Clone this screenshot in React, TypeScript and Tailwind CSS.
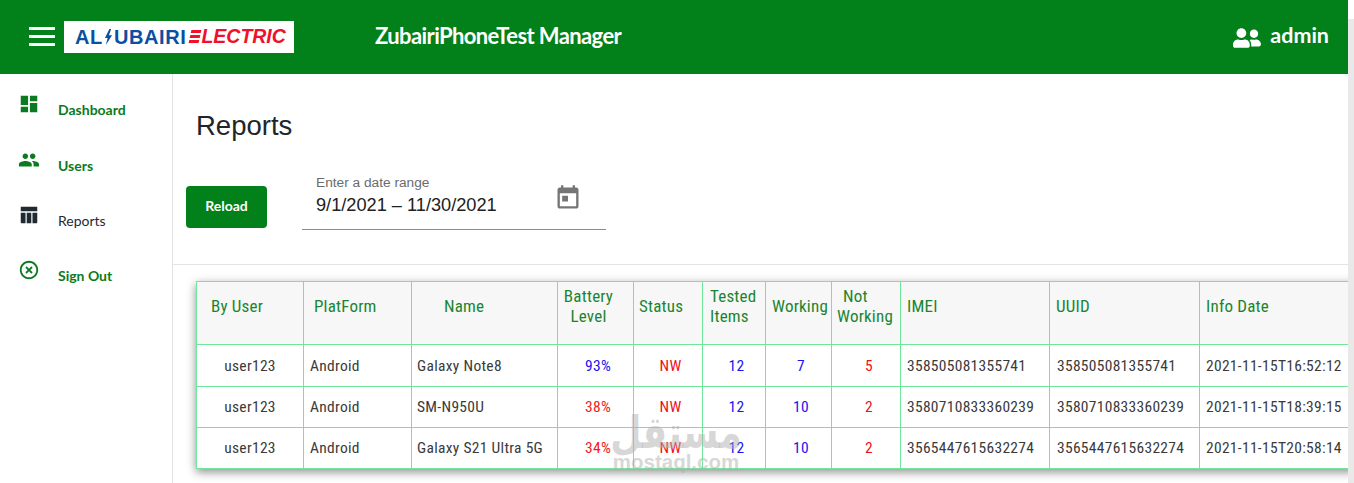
import { FaUserFriends } from "react-icons/fa";

const GREEN = "#02801a";
const cols = [107, 108, 146, 76, 69, 63, 66, 69, 149, 150, 155];
const HEAD = "Lato, 'Noto Sans', sans-serif";

const rows = [
  ["user123", "Android", "Galaxy Note8", "93%", "NW", "12", "7", "5", "358505081355741", "358505081355741", "2021-11-15T16:52:12", true],
  ["user123", "Android", "SM-N950U", "38%", "NW", "12", "10", "2", "3580710833360239", "3580710833360239", "2021-11-15T18:39:15", false],
  ["user123", "Android", "Galaxy S21 Ultra 5G", "34%", "NW", "12", "10", "2", "3565447615632274", "3565447615632274", "2021-11-15T20:58:14", false],
] as const;

function Icon({ d, className }: { d: string; className: string }) {
  return (
    <svg viewBox="0 0 24 24" fill="currentColor" className={className}>
      <path d={d} />
    </svg>
  );
}

function NavItem({ label, d, active, h }: { label: string; d: string; active: boolean; h: string }) {
  return (
    <div className={`flex items-center pl-[18px] ${h} ${active ? "text-[#0b7a20] font-bold" : "text-[#1f2a33]"}`}>
      <Icon d={d} className="w-[22px] h-[22px] mb-[11px]" />
      <span className="ml-[18px] text-[14px]" style={{ fontFamily: HEAD }}>{label}</span>
    </div>
  );
}

const th = "border-t border-r border-b border-[#6fe89b] bg-[#f7f7f7] font-normal text-[#1a8530] text-[17px] leading-[20px] tracking-[0.2px] p-0 pb-[14px] align-middle";
const td = "border-r border-b border-[#6fe89b] p-0 align-middle text-[15.5px] leading-[20px] tracking-[0.3px] whitespace-nowrap";
const cond = { fontFamily: "Roboto, sans-serif", fontStretch: "75%" };

export default function App() {
  return (
    <div className="h-[483px] w-[1354px] overflow-hidden flex bg-white" style={{ fontFamily: "'Liberation Sans', sans-serif" }}>
      <div className="w-[1348px] flex flex-col">
        <header className="h-[74px] shrink-0 flex items-center text-white" style={{ backgroundColor: GREEN }}>
          <div className="ml-[29px] w-[26px] flex flex-col gap-[5px] -mt-[1px]">
            <span className="block h-[3px] bg-white" />
            <span className="block h-[3px] bg-white" />
            <span className="block h-[3px] bg-white" />
          </div>
          <div className="ml-[9px] w-[230px] h-[32px] -mt-[1px] bg-white flex items-center pl-[11px] text-[20px] font-bold">
            <span className="text-[#0b4fa0] flex items-center tracking-[0.6px]">
              AL
              <svg viewBox="0 0 10 18" className="w-[9px] h-[16px] mx-[1px]" fill="#0b4fa0"><path d="M6 0L1 10h3l-2 8 7-11H5.5L8 0z" /></svg>
              UBAIRI
            </span>
            <span className="flex flex-col gap-[2px] ml-[4px] -skew-x-12">
              <span className="block w-[10px] h-[3px] bg-[#f0102a]" />
              <span className="block w-[10px] h-[3px] bg-[#f0102a]" />
              <span className="block w-[10px] h-[3px] bg-[#f0102a]" />
            </span>
            <span className="text-[#f0102a] italic text-[19.5px] ml-[1px]">LECTRIC</span>
          </div>
          <div className="ml-[81px] -mt-[4px] text-[22px] font-bold tracking-[-0.6px]" style={{ fontFamily: HEAD }}>ZubairiPhoneTest Manager</div>
          <div className="ml-auto mr-[19px] flex items-center -mt-[4px]">
            <FaUserFriends className="w-[28px] h-[28px] mt-[6px]" />
            <span className="ml-[9px] text-[21.5px] font-bold" style={{ fontFamily: HEAD }}>admin</span>
          </div>
        </header>
        <div className="flex-1 flex min-h-0">
          <aside className="w-[173px] shrink-0 border-r border-[#e2e2e2] pt-[7px]">
            <NavItem h="h-[57px]" label="Dashboard" active d="M3 13h8V3H3v10zm0 8h8v-6H3v6zm10 0h8V11h-8v10zm0-18v6h8V3h-8z" />
            <NavItem h="h-[55px]" label="Users" active d="M16 11c1.66 0 2.99-1.34 2.99-3S17.66 5 16 5c-1.66 0-3 1.34-3 3s1.34 3 3 3zm-8 0c1.66 0 2.99-1.34 2.99-3S9.66 5 8 5C6.34 5 5 6.34 5 8s1.34 3 3 3zm0 2c-2.33 0-7 1.17-7 3.5V19h14v-2.5c0-2.33-4.67-3.5-7-3.5zm8 0c-.29 0-.62.02-.97.05 1.16.84 1.97 1.97 1.97 3.45V19h6v-2.5c0-2.33-4.67-3.5-7-3.5z" />
            <NavItem h="h-[55px]" label="Reports" active={false} d="M3 3h18v5H3zM3 9.5h5.2V21H4a1 1 0 0 1-1-1zM9.5 9.5h5V21h-5zM15.8 9.5H21V20a1 1 0 0 1-1 1h-4.2z" />
            <NavItem h="h-[55px]" label="Sign Out" active d="M14.59 8L12 10.59 9.41 8 8 9.41 10.59 12 8 14.59 9.41 16 12 13.41 14.59 16 16 14.59 13.41 12 16 9.41 14.59 8zM12 2C6.47 2 2 6.47 2 12s4.47 10 10 10 10-4.47 10-10S17.53 2 12 2zm0 18c-4.41 0-8-3.59-8-8s3.59-8 8-8 8 3.59 8 8-3.59 8-8 8z" />
          </aside>
          <main className="flex-1 min-w-0 relative overflow-hidden">
            <h1 className="ml-[23px] mt-[35px] text-[27.5px] leading-[34px] text-[#212529]">Reports</h1>
            <div className="flex h-[99px] mt-[23px] border-b border-[#e4e4e4]">
              <button className="ml-[13px] mt-[20px] w-[81px] h-[42px] pb-[3px] rounded-[4px] text-white text-[14px] font-bold" style={{ backgroundColor: GREEN, fontFamily: HEAD }}>Reload</button>
              <div className="ml-[35px] mt-[16px] w-[304px] h-[48px] border-b border-[#8c8c8c] pl-[14px] relative">
                <div className="text-[13.7px] leading-[16px] text-[#6b6b6b] -mt-[7px]">Enter a date range</div>
                <div className="text-[18.2px] leading-[22px] text-[#212121] mt-[3px]">9/1/2021 – 11/30/2021</div>
                <Icon d="M19 3h-1V1h-2v2H8V1H6v2H5c-1.11 0-1.99.9-1.99 2L3 19c0 1.1.89 2 2 2h14c1.1 0 2-.9 2-2V5c0-1.1-.9-2-2-2zm0 16H5V8h14v11zM7 10h5v5H7z" className="absolute left-[252px] top-[2px] w-[28px] h-[28px] text-[#757575]" />
              </div>
            </div>
            <div className="ml-[23px] mt-[16px] w-[1159px]">
              <table className="table-fixed border-separate border-spacing-0 border-l border-[#6fe89b] shadow-[0_3px_9px_rgba(0,0,0,0.45)] w-[1159px]" style={cond}>
                <colgroup>
                  {cols.map((w, i) => (
                    <col key={i} style={{ width: w }} />
                  ))}
                </colgroup>
                <thead>
                  <tr className="h-[64px]">
                    <th className={`${th} text-left pl-[14px]`}>By User</th>
                    <th className={`${th} text-left pl-[10px]`}>PlatForm</th>
                    <th className={`${th} text-left pl-[32px]`}>Name</th>
                    <th className={`${th} text-center pr-[14px]`}>Battery<br />Level</th>
                    <th className={`${th} text-left pl-[5px]`}>Status</th>
                    <th className={`${th} text-left pl-[7px]`}>Tested<br />Items</th>
                    <th className={`${th} text-left pl-[6px]`}>Working</th>
                    <th className={`${th} text-left pl-[5px]`}><span className="pl-[6px]">Not</span><br />Working</th>
                    <th className={`${th} text-left pl-[6px]`}>IMEI</th>
                    <th className={`${th} text-left pl-[6px]`}>UUID</th>
                    <th className={`${th} text-left pl-[6px]`}>Info Date</th>
                  </tr>
                </thead>
                <tbody>
                  {rows.map((r, i) => (
                    <tr key={i} className={i === 0 ? "h-[42px] text-[#3a3a3a]" : "h-[41px] text-[#3a3a3a]"}>
                      <td className={`${td} text-center`}>{r[0]}</td>
                      <td className={`${td} pl-[6px]`}>{r[1]}</td>
                      <td className={`${td} pl-[5px]`}>{r[2]}</td>
                      <td className={`${td} text-center pl-[5px] ${r[11] ? "text-[#1a12f0]" : "text-[#f02020]"}`}>{r[3]}</td>
                      <td className={`${td} text-center pl-[5px] text-[#f0101a]`}>{r[4]}</td>
                      <td className={`${td} text-center pl-[5px] text-[#1a12f0]`}>{r[5]}</td>
                      <td className={`${td} text-center pl-[5px] text-[#1a12f0]`}>{r[6]}</td>
                      <td className={`${td} text-center pl-[6px] text-[#f0101a]`}>{r[7]}</td>
                      <td className={`${td} pl-[6px]`}>{r[8]}</td>
                      <td className={`${td} pl-[7px]`}>{r[9]}</td>
                      <td className={`${td} pl-[6px]`}>{r[10]}</td>
                    </tr>
                  ))}
                </tbody>
              </table>
            </div>
            <div className="absolute left-[428px] top-[339px] w-[150px] text-center text-[#b0b0b0]/50 pointer-events-none">
              <div className="text-[36px] leading-[40px] font-bold scale-y-125" style={{ fontFamily: "'DejaVu Sans', sans-serif" }}>مستقل</div>
              <div className="text-[20.5px] leading-[18px] font-bold" style={{ fontFamily: "'Liberation Sans', sans-serif" }}>mostaql.com</div>
            </div>
          </main>
        </div>
      </div>
      <div className="w-[6px] mt-[19px] bg-[#e9e9e9]" />
    </div>
  );
}
